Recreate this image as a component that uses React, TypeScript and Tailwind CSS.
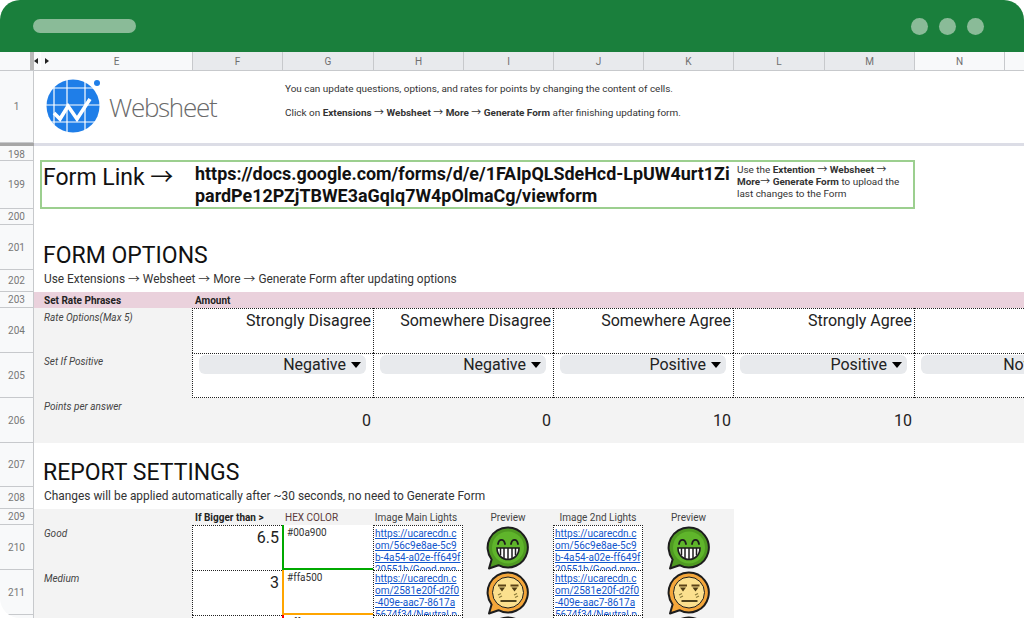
import React from "react";

const cols = ["F", "G", "H", "I", "J", "K", "L", "M"];

function A() {
  return <span className="font-['Noto_Sans_CJK_SC','Liberation_Sans',sans-serif] font-normal leading-none">→</span>;
}

function RowHead({ n, className = "" }: { n: string; className?: string }) {
  return (
    <div className={`w-[34px] shrink-0 bg-[#f8f9fa] border-r border-b border-[#c7c9cc] flex items-center justify-center text-[10px] text-[#777] ${className}`}>
      {n}
    </div>
  );
}

function Logo() {
  return (
    <svg width="60" height="62" viewBox="0 0 60 62" className="shrink-0">
      <circle cx="29" cy="34" r="26.5" fill="#1f7ee8" />
      <g stroke="#fff" strokeWidth="1.2">
        <path d="M10 15V53M23 7V61M41 7V61M2 16H56M2 33H56M3 50H55" />
      </g>
      <path d="M10 41L16 47L24 34L33 47L46 27" fill="none" stroke="#fff" strokeWidth="3.6" />
      <circle cx="53" cy="11" r="3" fill="#1f7ee8" />
    </svg>
  );
}

function Emoji({ fill, inner, kind }: { fill: string; inner: string; kind: "good" | "neutral" | "bad" }) {
  return (
    <svg width="44" height="44" viewBox="0 0 44 44" className="shrink-0">
      <path d="M22 1.5A20 20 0 1 1 12.5 39.2L3 42.5L5.6 33.5A20 20 0 0 1 22 1.5Z" fill={fill} stroke="#1d1d1d" strokeWidth="2" strokeLinejoin="round" />
      {kind === "good" ? (
        <g>
          <circle cx="22" cy="21.5" r="16" fill={inner} />
          <path d="M12 18C13 12.5 18 12.5 19 18M25 18C26 12.5 31 12.5 32 18" fill="none" stroke="#1d1d1d" strokeWidth="1.8" strokeLinecap="round" />
          <path d="M11 22H33C33 29 28 33.5 22 33.5C16 33.5 11 29 11 22Z" fill="#fff" stroke="#1d1d1d" strokeWidth="1.6" />
          <path d="M14.5 22V29.5M18 22V32.5M22 22V33.5M26 22V32.5M29.5 22V29.5" stroke="#1d1d1d" strokeWidth="1.5" />
        </g>
      ) : (
        <g>
          <circle cx="22" cy="21.5" r="15.5" fill={inner} stroke="#1d1d1d" strokeWidth="1" />
          <path d="M12 14.5H20M24.5 14.5H32.5" stroke="#5b4216" strokeWidth="2" />
          <path d="M13 16.5H19L16 20.5ZM25.5 16.5H31.5L28.5 20.5Z" fill="#4d3b14" />
          <path d="M12 24L15 22.5M13 26.5L16 25M28 24L31 22.5M29 26.5L32 25" stroke="#8a7a3a" strokeWidth="1.2" />
          <path d="M14.5 30H30.5" stroke="#3a3214" strokeWidth="1.8" />
        </g>
      )}
    </svg>
  );
}

function LinkCell({ lines }: { lines: string[] }) {
  return (
    <div className="w-[90px] shrink-0 h-full bg-white border-x border-t border-dotted border-[#222] pl-[1px] pt-[2px] overflow-hidden text-[10px] leading-[12px] text-[#1155cc] whitespace-nowrap">
      {lines.map((l) => (
        <a key={l} className="block underline">{l}</a>
      ))}
    </div>
  );
}

function RateCell({ label, w = "w-[181px]" }: { label: string; w?: string }) {
  return (
    <div className={`${w} shrink-0 h-full bg-white border-l border-t border-dotted border-[#222] pr-[2px] text-right text-[16px] leading-[23px] text-[#222] whitespace-nowrap`}>
      {label}
    </div>
  );
}

function DropCell({ label, w = "w-[181px]", wide = false }: { label: string; w?: string; wide?: boolean }) {
  return (
    <div className={`${w} shrink-0 h-full bg-white border-l border-t border-b border-dotted border-[#222] pl-[6px] pr-[7px] pt-[1px]`}>
      <div className={`h-[19px] rounded-[6px] bg-[#e8eaed] flex items-center justify-end gap-[5px] pr-[5px] text-[16px] text-[#222] pt-[1px] ${wide ? "w-[164px]" : ""}`}>
        <span className="whitespace-nowrap">{label}</span>
        <span className="w-0 h-0 border-x-[5.5px] border-t-[6px] border-x-transparent border-t-black" />
      </div>
    </div>
  );
}

function Num({ v, w = "w-[181px]" }: { v: string; w?: string }) {
  return <div className={`${w} shrink-0 pr-[2px] pt-[13px] text-right text-[16px] leading-[20px] text-[#222]`}>{v}</div>;
}

export default function App() {
  return (
    <div className="w-[1024px] h-[618px] overflow-hidden rounded-t-[20px] rounded-bl-[20px] bg-white flex flex-col font-['Roboto','Liberation_Sans',sans-serif] text-[#222]">
      <div className="h-[52px] shrink-0 bg-[#1a7f3c] flex items-center justify-between pl-[33px] pr-[40px]">
        <div className="w-[103px] h-[14px] rounded-full bg-[#8abb98]" />
        <div className="flex gap-[11px]">
          <div className="w-[17px] h-[17px] rounded-full bg-[#8abb98]" />
          <div className="w-[17px] h-[17px] rounded-full bg-[#8abb98]" />
          <div className="w-[17px] h-[17px] rounded-full bg-[#8abb98]" />
        </div>
      </div>

      <div className="h-[19px] shrink-0 flex border-b border-[#c7c9cc] text-[10px] text-[#6f6f6f]">
        <div className="w-[30px] bg-[#f8f9fa]" />
        <div className="w-[4px] bg-[#b8b8b8]" />
        <div className="w-[159px] bg-[#f8f9fa] border-r border-[#c7c9cc] relative flex items-center justify-center pl-[7px]">
          E
          <span className="absolute left-[0px] top-[6px] w-0 h-0 border-y-[3.5px] border-r-[4px] border-y-transparent border-r-[#222]" />
          <span className="absolute left-[6px] top-0 w-[1px] h-full bg-white" />
          <span className="absolute left-[11px] top-[6px] w-0 h-0 border-y-[3.5px] border-l-[4px] border-y-transparent border-l-[#222]" />
        </div>
        <div className="grid grid-cols-[90px_91px_90px_90px_90px_90px_91px_90px]">
          {cols.map((c) => (
            <div key={c} className="bg-[#e8eaed] border-r border-[#c7c9cc] flex items-center justify-center">{c}</div>
          ))}
        </div>
        <div className="w-[90px] bg-[#f8f9fa] border-r border-[#c7c9cc] flex items-center justify-center">N</div>
        <div className="flex-1 bg-[#f8f9fa]" />
      </div>

      <div className="h-[72px] shrink-0 flex">
        <RowHead n="1" />
        <div className="w-[251px] shrink-0 flex items-start pl-[10px] pt-[1px] gap-[5px]">
          <Logo />
          <span className="pt-[17px] font-['Open_Sans',sans-serif] font-light text-[26px] leading-[36px] tracking-[-1.3px] text-[#6a6a6a]">Websheet</span>
        </div>
        <div className="text-[9.95px] leading-[12px] text-[#333] pt-[12px] whitespace-nowrap">
          <p>You can update questions, options, and rates for points by changing the content of cells.</p>
          <p className="mt-[12px]">Click on <b>Extensions <A /> Websheet <A /> More <A /> Generate Form</b> after finishing updating form.</p>
        </div>
      </div>

      <div className="h-[3px] shrink-0 flex">
        <div className="w-[34px] bg-[#a6a6a6]" />
        <div className="flex-1 bg-[#dcdde6]" />
      </div>

      <div className="h-[15px] shrink-0 flex"><RowHead n="198" className="pt-[2px]" /></div>

      <div className="h-[48px] shrink-0 flex">
        <RowHead n="199" />
        <div className="ml-[6px] -mt-[1px] w-[875px] h-[49px] border-2 border-[#9ccf8f] flex">
          <div className="w-[153px] shrink-0 pl-[1px] text-[23px] leading-[32px] text-[#111] whitespace-nowrap">Form Link <A /></div>
          <div className="w-[541px] shrink-0 pt-[1px] text-[17.9px] leading-[22px] font-bold text-[#111] whitespace-nowrap">
            <div>https://docs.google.com/forms/d/e/1FAIpQLSdeHcd-LpUW4urt1Zi</div>
            <div>pardPe12PZjTBWE3aGqIq7W4pOlmaCg/viewform</div>
          </div>
          <div className="pl-[1px] pt-[2px] text-[9.95px] leading-[12px] text-[#333] whitespace-nowrap">
            <div>Use the <b>Extention <A /> Websheet <A /></b></div>
            <div><b>More<A /> Generate Form</b> to upload the</div>
            <div>last changes to the Form</div>
          </div>
        </div>
      </div>

      <div className="h-[16px] shrink-0 flex"><RowHead n="200" /></div>

      <div className="h-[45px] shrink-0 flex">
        <RowHead n="201" />
        <div className="pl-[9px] pt-[17px] text-[23px] leading-[28px] text-[#111]">FORM OPTIONS</div>
      </div>
      <div className="h-[22px] shrink-0 flex">
        <RowHead n="202" />
        <div className="pl-[10px] pt-[2px] text-[11.9px] leading-[15px] text-[#333]">Use Extensions <A /> Websheet <A /> More <A /> Generate Form after updating options</div>
      </div>

      <div className="h-[16px] shrink-0 flex">
        <RowHead n="203" />
        <div className="flex-1 bg-[#ead1dc] flex items-center pt-[1px] text-[10px] font-bold text-[#222]">
          <div className="w-[158px] pl-[10px]">Set Rate Phrases</div>
          <div className="pl-[3px]">Amount</div>
        </div>
      </div>

      <div className="h-[45px] shrink-0 flex">
        <RowHead n="204" />
        <div className="flex-1 flex bg-[#f3f3f3]">
          <div className="w-[158px] shrink-0 pl-[10px] pt-[2px] text-[10px] italic text-[#444]">Rate Options(Max 5)</div>
          <RateCell label="Strongly Disagree" />
          <RateCell label="Somewhere Disagree" w="w-[180px]" />
          <RateCell label="Somewhere Agree" w="w-[180px]" />
          <RateCell label="Strongly Agree" />
          <div className="flex-1 h-full bg-white border-l border-t border-dotted border-[#222]" />
        </div>
      </div>

      <div className="h-[45px] shrink-0 flex">
        <RowHead n="205" />
        <div className="flex-1 flex bg-[#f3f3f3] overflow-hidden">
          <div className="w-[158px] shrink-0 pl-[10px] pt-[1px] text-[10px] italic text-[#444]">Set If Positive</div>
          <DropCell label="Negative" />
          <DropCell label="Negative" w="w-[180px]" />
          <DropCell label="Positive" w="w-[180px]" />
          <DropCell label="Positive" />
          <DropCell label="Not Sure" w="w-[110px]" wide />
        </div>
      </div>

      <div className="h-[45px] shrink-0 flex">
        <RowHead n="206" />
        <div className="flex-1 flex bg-[#f3f3f3]">
          <div className="w-[158px] shrink-0 pl-[10px] pt-[1px] text-[10px] italic text-[#444]">Points per answer</div>
          <Num v="0" />
          <Num v="0" w="w-[180px]" />
          <Num v="10" w="w-[180px]" />
          <Num v="10" />
        </div>
      </div>

      <div className="h-[44px] shrink-0 flex">
        <RowHead n="207" />
        <div className="pl-[9px] pt-[16px] text-[23px] leading-[28px] text-[#111]">REPORT SETTINGS</div>
      </div>
      <div className="h-[22px] shrink-0 flex">
        <RowHead n="208" />
        <div className="pl-[10px] pt-[2px] text-[11.9px] leading-[15px] text-[#333]">Changes will be applied automatically after ~30 seconds, no need to Generate Form</div>
      </div>

      <div className="h-[16px] shrink-0 flex">
        <RowHead n="209" />
        <div className="w-[700px] flex bg-[#f3f3f3] text-[10px] leading-[18px] text-[#444]">
          <div className="w-[158px]" />
          <div className="w-[90px] pl-[3px] font-bold text-[#222] whitespace-nowrap">If Bigger than &gt;</div>
          <div className="w-[91px] pl-[3px] text-[#5b3a3a]">HEX COLOR</div>
          <div className="w-[90px] pr-[4px] text-center whitespace-nowrap">Image Main Lights</div>
          <div className="w-[90px] text-center">Preview</div>
          <div className="w-[90px] text-center">Image 2nd Lights</div>
          <div className="w-[91px] text-center">Preview</div>
        </div>
      </div>

      {[
        {
          n: "210", label: "Good", v: "6.5", hex: "#00a900", border: "border-[#00a900]", face: "#4f9a22", inner: "#5fb52b", kind: "good" as const,
          lines: ["https://ucarecdn.c", "om/56c9e8ae-5c9", "b-4a54-a02e-ff649f", "20551b/Good.png..."],
        },
        {
          n: "211", label: "Medium", v: "3", hex: "#ffa500", border: "border-[#ffa500]", face: "#f4a63a", inner: "#fbe08e", kind: "neutral" as const,
          lines: ["https://ucarecdn.c", "om/2581e20f-d2f0", "-409e-aac7-8617a", "5674f34/Neutral.p..."],
        },
        {
          n: "212", label: "Bad", v: "0", hex: "#ff0000", border: "border-[#ff0000]", face: "#c9352b", inner: "#e8695c", kind: "bad" as const,
          lines: ["https://ucarecdn.c", "om/", "-", "."],
        },
      ].map((r) => (
        <div key={r.n} className="h-[45px] shrink-0 flex">
          <RowHead n={r.n} />
          <div className="w-[700px] flex bg-[#f3f3f3]">
            <div className="w-[158px] shrink-0 pl-[10px] pt-[1px] text-[10px] italic text-[#444]">{r.label}</div>
            <div className="w-[90px] shrink-0 h-full bg-white border-l border-t border-dotted border-[#222] pr-[3px] pt-[1px] text-right text-[16px] leading-[22px] text-[#222]">{r.v}</div>
            <div className={`w-[91px] shrink-0 h-full bg-white border-l-2 border-b-2 ${r.border} pl-[3px] pt-[2px] text-[10px] leading-[12px] text-[#333]`}>{r.hex}</div>
            <LinkCell lines={r.lines} />
            <div className="w-[90px] shrink-0 flex justify-center pt-[1px]"><Emoji fill={r.face} inner={r.inner} kind={r.kind} /></div>
            <LinkCell lines={r.lines} />
            <div className="w-[91px] shrink-0 flex justify-center pt-[1px]"><Emoji fill={r.face} inner={r.inner} kind={r.kind} /></div>
          </div>
        </div>
      ))}
    </div>
  );
}
